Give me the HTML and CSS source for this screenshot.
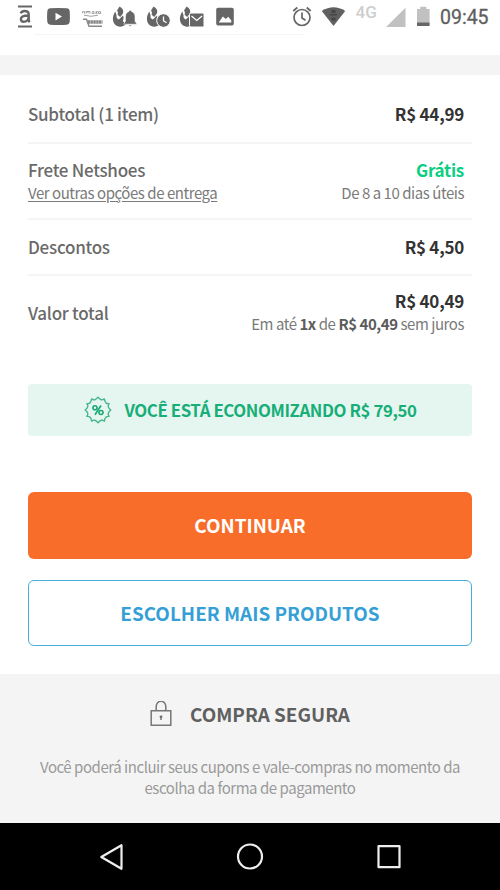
FILE: index.html
```
<!DOCTYPE html>
<html lang="pt-BR">
<head>
<meta charset="utf-8">
<title>Resumo do pedido</title>
<link rel="stylesheet" href="styles.css">
</head>
<body>
<header class="status">
  <svg class="notifications" width="240" height="34" viewBox="0 0 240 34" fill="#666">
    <path d="M18 6.500h14M18 26.500h14" stroke="#666" stroke-width="2"/>
    <path d="M20.700 13.400c.7-1.700 2-2.400 4-2.400 2.700 0 4 1.200 4 3.400v5.200c0 1 .3 1.800.9 2.600M28.600 15.500c-5 0-7.700.8-7.700 3.500 0 1.700 1 2.700 2.800 2.700 2.200 0 4.500-1.400 4.900-3.800" fill="none" stroke="#666" stroke-width="2.400"/>
    <path fill-rule="evenodd" d="M50 8.300q8.500-.8 17 0 2.500.3 2.700 2.700.4 5.500 0 11-.3 2.400-2.700 2.700-8.500.6-17 0-2.400-.3-2.700-2.700-.5-5.500 0-11 .3-2.400 2.700-2.700zM55.500 12.700v7.800l6.500-3.900z"/>
    <g fill="none" stroke="#888">
      <path d="M82.500 13.300v-1.600h2v1.800M86 13.500v-2h2v2m0-2h2v2M92 11.700h2v1.800h-2v-1M95.500 11.700h2l-2 1.600h2M98.600 11.700h2v1.800h-2v-1.800" stroke-width=".8"/>
      <path d="M84 15.200q7 2.200 14 0" stroke-width=".8"/>
      <path d="M83 19.300h3.500l2.500 7h13" stroke-width="1.400"/>
      <path d="M87.500 22h15" stroke-width="3.600" stroke-dasharray="2.500 .4"/>
    </g>
    <g id="hand">
      <path d="M119.500 6.500c3.500 2 4.500 4.500 3.300 7.200l-2.600 3.300-2.600-2.300c.5-1.800.4-3-.6-4.200z"/>
      <path d="M115.300 11.500l1.300 4c-.5 2 .4 3.300 2.200 3.900l4.200-3.800c1 2 .5 4-.2 5.500l3 3.200c-2.500 3-8.200 3.300-10.800.3-2.900-3.300-2.700-8.500.3-13z"/>
    </g>
    <use href="#hand" x="34"/><use href="#hand" x="67"/>
    <path d="M123.500 24.200l2-3v-4.500c0-2.800 1.400-4.700 3.500-5.200v-1h2.400v1c2 .5 3.600 2.400 3.600 5.200v4.500l2 3zM128.400 25h3.600l-1.800 1.500z" stroke="#fff" stroke-width=".5"/>
    <circle cx="163.500" cy="20.500" r="6.800" stroke="#fff"/><path d="M163.500 16.500v4.200l3 2" stroke="#fff" stroke-width="1.300" fill="none"/>
    <rect x="189.500" y="13" width="14.500" height="14" rx="1.500" stroke="#fff"/><path d="M191.500 16l5.300 4.500L202 16" fill="none" stroke="#fff" stroke-width="1.300"/>
    <path fill-rule="evenodd" d="M218 7.700h14q1.800 0 1.800 1.800v14q0 1.900-1.800 1.900h-14q-1.800 0-1.800-1.900v-14q0-1.800 1.800-1.800zM218.700 22.500h12.600v-2l-3-3.800-2.500 2.200-3-2.500z"/>
  </svg>
  <svg class="system" width="150" height="34" viewBox="290 0 150 34">
    <g fill="none" stroke="#666" stroke-width="1.700">
      <circle cx="302" cy="17.500" r="8"/><path d="M302 12.500V18l3.500 2.300M293.300 11l4-3.500M310.700 11l-4-3.500"/>
    </g>
    <path d="M321.800 11q11.700-7.500 23.400 0L333.500 26z" fill="#606060"/>
    <path d="M331.500 10h4v3h-4zM330 14h7v1.500h-7zM331.500 17.500h4v3h-4z" fill="#454545"/>
    <text class="network" x="355.500" y="18">4G</text>
    <path d="M405.500 7.800V27H386z" fill="#c1c1c1"/>
    <path d="M417 9h3.200V6.800h6.200V9h3.200v14H417z" fill="#c1c1c1"/><path d="M417 22.500h12.600V26H417z" fill="#666"/>
  </svg>
  <time class="clock">09:45</time>
</header>
<div class="gap"></div>
<main>
  <dl class="summary">
    <div class="row">
      <dt>Subtotal (1 item)</dt>
      <dd>R$ 44,99</dd>
    </div>
    <div class="row row-tall">
      <dt>Frete Netshoes<a class="link">Ver outras opções de entrega</a></dt>
      <dd><span class="free">Grátis</span><span class="note">De 8 a 10 dias úteis</span></dd>
    </div>
    <div class="row row-short">
      <dt>Descontos</dt>
      <dd>R$ 4,50</dd>
    </div>
    <div class="row row-total">
      <dt>Valor total</dt>
      <dd>R$ 40,49<span class="note">Em até <b>1x</b> de <b>R$ 40,49</b> sem juros</span></dd>
    </div>
  </dl>
  <div class="savings">
    <svg width="28" height="28" viewBox="-14 -14 28 28" fill="none" stroke="#45b58a" stroke-width="1.400" stroke-linejoin="round">
      <path d="M0-12.800Q3.100-8.600 6.400-11.100Q7-5.900 11.100-6.400Q8.600-3.100 12.800 0Q8.600 3.100 11.100 6.400Q7 5.900 6.400 11.100Q3.100 8.600 0 12.800Q-3.100 8.600-6.400 11.100Q-7 5.900-11.100 6.400Q-8.600 3.100-12.800 0Q-8.600-3.100-11.100-6.400Q-7-5.900-6.400-11.100Q-3.100-8.600 0-12.800z"/>
      <g stroke="#18a875" stroke-width="1.600"><circle cx="-3" cy="-2.300" r="2"/><circle cx="3" cy="2.500" r="2"/><path d="M3-4.500L-3 4.700"/></g>
    </svg>
    <span>VOCÊ ESTÁ ECONOMIZANDO R$ 79,50</span>
  </div>
  <button class="btn btn-primary"><span>CONTINUAR</span></button>
  <button class="btn btn-outline"><span>ESCOLHER MAIS PRODUTOS</span></button>
</main>
<footer class="secure">
  <h2>
    <svg width="22" height="26" viewBox="0 0 22 26" fill="none" stroke="#777" stroke-width="1.500">
      <path d="M1.200 9.700h19.600v14.500H1.200zM6.200 9.500V5.500a4.800 5.200 0 0 1 9.600 0v4"/><circle cx="11" cy="15.800" r="1.400" fill="#666" stroke="none"/><path d="M11 15.500V19"/>
    </svg>
    <span>COMPRA SEGURA</span>
  </h2>
  <p>Você poderá incluir seus cupons e vale-compras no momento da<br>escolha da forma de pagamento</p>
</footer>
<nav class="navbar">
  <svg width="500" height="67" viewBox="0 0 500 67" fill="none" stroke="#eee" stroke-width="2.200" stroke-linejoin="round">
    <path d="M121.500 22.200v23.600L101.300 34z"/><circle cx="250" cy="33.500" r="12"/><rect x="378.500" y="23.200" width="21" height="21"/>
  </svg>
</nav>
</body>
</html>
```
FILE: styles.css
```
* { box-sizing: border-box; }
body {
  margin: 0;
  width: 500px;
  height: 890px;
  overflow: hidden;
  display: flex;
  flex-direction: column;
  background: #fff;
  color: #666;
  font-family: "Noto Sans CJK SC", "Noto Sans", sans-serif;
  font-size: 17px;
  line-height: 22px;
  white-space: nowrap;
}
svg { display: block; flex: none; }
.status {
  height: 55px;
  display: flex;
  align-items: flex-start;
  background: linear-gradient(#f5f5f5, #f5f5f5) 34px 33.500px / 270px 1px no-repeat;
}
.system { margin-left: 50px; }
.network { font: 500 17px Roboto, sans-serif; fill: #cecece; }
.clock {
  font: 400 19.500px/36px Roboto, sans-serif;
  color: #606060;
  -webkit-text-stroke: .3px #606060;
}
.gap { height: 20px; background: #f4f4f4; }
main {
  height: 599px;
  padding: 11px 28px 0;
  display: flex;
  flex-direction: column;
}
.summary { margin: 0 0 34px; }
.row {
  height: 58px;
  padding-right: 8px;
  display: flex;
  align-items: center;
  justify-content: space-between;
  border-bottom: 2px solid #f5f5f5;
}
.row-tall { height: 76px; }
.row-short { height: 56px; padding-bottom: 1px; }
.row-total { height: 74px; border: 0; padding-bottom: 1px; }
dt { font-weight: 500; color: #6a6a6a; letter-spacing: -.26px; }
dd { margin: 0; font-weight: 700; color: #333; text-align: right; letter-spacing: -.25px; }
.free { display: block; color: #0cce82; }
.link, .note {
  display: block;
  font-size: 15px;
  line-height: 23px;
  font-weight: 400;
  color: #7a7a7a;
  letter-spacing: -.45px;
}
.link { text-decoration: underline; text-underline-offset: 2px; }
.note b { font-weight: 700; color: #5c5c5c; }
.savings {
  height: 52px;
  border-radius: 4px;
  background: #e5f6f0;
  color: #18ae78;
  font-size: 16.800px;
  font-weight: 700;
  letter-spacing: -.4px;
  display: flex;
  align-items: center;
  justify-content: center;
  gap: 13px;
}
.btn {
  height: 67px;
  margin: 56px 0 0;
  padding: 0 0 2px;
  border: 0;
  border-radius: 6px;
  font: 700 18.900px/24px "Noto Sans CJK SC", sans-serif;
}
.btn-primary { background: #f96d2a; color: #fff; }
.btn-outline {
  height: 66px;
  margin-top: 21px;
  padding-bottom: 1px;
  border: 1.500px solid #48addb;
  background: #fff;
  color: #359fd6;
}
.secure {
  height: 149px;
  padding-top: 26px;
  background: #f4f4f4;
  text-align: center;
}
.secure h2 {
  margin: 0;
  height: 28px;
  display: flex;
  justify-content: center;
  align-items: center;
  gap: 18px;
  font-size: 18.900px;
  font-weight: 700;
  color: #606060;
}
.secure p {
  margin: 28px 0 0;
  font-size: 15px;
  line-height: 21px;
  font-weight: 400;
  color: #9a9a9a;
  letter-spacing: -.46px;
}
.navbar { height: 67px; background: #000; }
```
